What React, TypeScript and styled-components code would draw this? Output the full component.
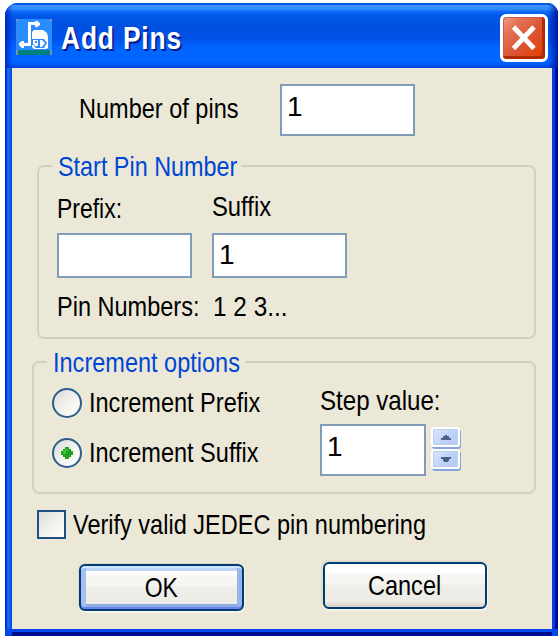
import React, { useState } from 'react';
import styled, { createGlobalStyle } from 'styled-components';

const GlobalStyle = createGlobalStyle`
  * { box-sizing: border-box; }
  body { margin: 0; background: #fff; overflow: hidden; }
`;

const Desktop = styled.div`
  width: 558px;
  height: 636px;
  padding: 3px 0 0 5px;
  background: #fff;
  font-family: 'Liberation Sans', Arial, sans-serif;
  color: #000;
`;

const Dialog = styled.section`
  width: 553px;
  height: 633px;
  display: flex;
  flex-direction: column;
  overflow: hidden;
  border-radius: 13px 11px 0 0;
  background: #0046e8;
`;

const TitleBar = styled.header`
  height: 65px;
  flex: none;
  display: flex;
  align-items: flex-start;
  padding: 11px 10px 0 11px;
  background:
    linear-gradient(90deg, rgba(0, 20, 190, 0.7) 0, rgba(0, 40, 210, 0) 8px, rgba(0, 40, 210, 0) 543px, rgba(0, 10, 150, 0.85) 553px),
    linear-gradient(180deg, #0058e6 0, #0058e6 2px, #3d95ff 2px, #318bff 6px, #0a66f4 9px, #0057e8 13px, #0050e0 22px, #0052e6 35px, #005cf8 41px, #0066ff 48px, #0066ff 59px, #0056f0 62px, #0042d0 65px);
`;

const AppIcon = styled.svg`
  flex: none;
  display: block;
  width: 36px;
  height: 36px;
  margin-top: 5px;
`;

const Title = styled.h1`
  flex: 1;
  margin: 9px 0 0 9px;
  font-size: 31px;
  line-height: 32px;
  font-weight: 700;
  letter-spacing: 1px;
  color: #fff;
  white-space: pre;
  text-shadow: 2px 2px 0 #0a1a88;
  transform: scaleX(0.85);
  transform-origin: left;
`;

const CloseButton = styled.button`
  flex: none;
  width: 48px;
  height: 48px;
  padding: 0;
  border: 3px solid #fff;
  border-radius: 6px;
  display: grid;
  place-items: center;
  background: linear-gradient(135deg, #f0a08c 0, #e5755a 22%, #dc5432 55%, #e04510 85%, #c03808 100%);
  box-shadow: inset -3px -3px 0 #b02c08, inset 1px 1px 0 #cc5a44;
`;

const Body = styled.main`
  flex: 1;
  margin: 0 6px 7px 7px;
  padding-top: 16px;
  background: #ebe8d8;
  box-shadow:
    -2px 0 0 #0050e4, -5px 0 0 #1666f2, -7px 0 0 #0030dc,
    3px 0 0 #0040e0, 6px 0 0 #000c90,
    0 3px 0 #0048f0, 0 7px 0 #000c90;
`;

const Row = styled.div<{ $left?: number; $gap?: number; $top?: number }>`
  display: flex;
  align-items: flex-start;
  padding-left: ${(p) => p.$left ?? 0}px;
  column-gap: ${(p) => p.$gap ?? 0}px;
  margin-top: ${(p) => p.$top ?? 0}px;
`;

const Column = styled.div`
  flex: none;
  display: flex;
  flex-direction: column;
`;

const Caption = styled.span<{ $width?: number; $squeeze?: number; $top?: number }>`
  flex: none;
  display: block;
  width: ${(p) => (p.$width ? `${p.$width}px` : 'auto')};
  height: 28px;
  margin-top: ${(p) => p.$top ?? 0}px;
  font-size: 28px;
  line-height: 28px;
  white-space: pre;
  transform: scaleX(${(p) => p.$squeeze ?? 0.84});
  transform-origin: left;
`;

const Field = styled.input<{ $width?: number; $height?: number }>`
  flex: none;
  display: block;
  width: ${(p) => p.$width ?? 135}px;
  height: ${(p) => p.$height ?? 52}px;
  margin: 0;
  padding: 0 5px ${(p) => ((p.$height ?? 52) > 46 ? 6 : 2)}px;
  border: 2px solid #7f9db9;
  border-radius: 0;
  outline: 0;
  background: #fff;
  color: #000;
  font: 28px 'Liberation Sans', Arial, sans-serif;
`;

const Group = styled.fieldset<{ $left: number; $top: number; $height: number }>`
  min-width: 0;
  margin: ${(p) => p.$top}px 16px 0 ${(p) => p.$left}px;
  padding: 0;
  height: ${(p) => p.$height}px;
  border: 2px solid #d0d0bf;
  border-radius: 7px;
`;

const Legend = styled.div<{ $width: number }>`
  width: ${(p) => p.$width}px;
  height: 28px;
  margin: -14px 0 0 13px;
  padding-left: 6px;
  background: #ebe8d8;
  color: #0046d5;
`;

const OptionButton = styled.button`
  display: flex;
  align-items: center;
  gap: 7px;
  height: 30px;
  width: 268px;
  margin: 0;
  padding: 0;
  border: 0;
  background: none;
  font-family: inherit;
  color: #000;
  text-align: left;
`;

const RadioDisc = styled.span`
  flex: none;
  width: 30px;
  height: 30px;
  border: 2px solid #2a5f8c;
  border-radius: 50%;
  display: grid;
  place-items: center;
  background: linear-gradient(135deg, #dcdcd7 0, #f3f3ef 55%, #fff 100%);
`;

const CheckSquare = styled.button`
  flex: none;
  width: 29px;
  height: 29px;
  padding: 0;
  border: 2px solid #1c5180;
  display: grid;
  place-items: center;
  background: linear-gradient(135deg, #dcdcd7 0, #f3f3ef 55%, #fff 100%);
`;

const Spinner = styled.div`
  width: 31px;
  display: grid;
  row-gap: 2px;
  margin: 3px 0 0 5px;
`;

const SpinButton = styled.button`
  width: 29px;
  height: 20px;
  padding: 0;
  display: grid;
  place-items: center;
  border: 2px solid #fff;
  border-radius: 3px;
  background: linear-gradient(135deg, #dce8ff 0, #c1d3fb 50%, #b2c8f6 100%);
  box-shadow: inset 0 0 0 1px #bccdf2, 1px 2px 0 #86a4dc;
`;

const PushButton = styled.button<{ $primary?: boolean; $width: number }>`
  flex: none;
  width: ${(p) => p.$width}px;
  height: 47px;
  padding: 0;
  display: grid;
  place-items: center;
  border: 2px solid #003c74;
  border-radius: 6px;
  color: #000;
  font-family: inherit;
  background: linear-gradient(180deg, #fff 0, #fff 20%, #f6f6f2 24%, #f4f4f0 46%, #eeeee9 50%, #ecebe6 88%, #d6d0c5 100%);
  box-shadow: ${(p) =>
    p.$primary
      ? 'inset 0 2px 0 #cee7ff, inset 0 -2px 0 #6982ee, inset 5px 0 0 #a5bff2, inset -5px 0 0 #98b4ea, inset 0 5px 0 #bcd4f6, inset 0 -5px 0 #89ade4, 1px 2px 0 #f6f4ec, -1px -1px 0 #dedbc9'
      : '1px 2px 0 #f6f4ec, -2px -2px 0 #dfddcd'};

  ${Caption} { transform-origin: center; }
`;

function ProgramIcon() {
  return (
    <AppIcon viewBox="0 0 36 36" aria-hidden="true">
      <path fill="#2b8cff" d="M0 0h36v31H0z" />
      <path fill="#008080" d="M2 31h32v5H2z" />
      <path fill="#7e8fb0" d="M0 31h2v5H0zM34 31h2v5h-2zM0 0h2v2H0zM34 0h2v2h-2z" />
      <path fill="#fff" d="M12 3h7V2h2l3 2v2l-3 2h-2V6h-4v21H8v2H6l-3-3v-2l3-2h2v2h4z" />
      <path fill="#fff" d="M18 11h9l4 3 1 4v11l-2 1H18l-2-2V13z" />
      <path fill="#2b8cff" d="M15 20h13l3 4-3 5h-8l-3-3h-2z" />
      <path fill="#fff" d="M17 21h5v6h-3l-2-2zM24 21h2l3 3-3 4h-2z" />
      <path fill="#2b8cff" d="M19 22h2v2h-2z" />
    </AppIcon>
  );
}

function CloseGlyph() {
  return (
    <svg width="26" height="26" viewBox="0 0 26 26" aria-hidden="true">
      <path d="M2.5 2 23 23.5M23 2 2.5 23.5" stroke="#fff" strokeWidth="4.8" />
    </svg>
  );
}

function RadioOption({ label, checked, onSelect }: { label: string; checked: boolean; onSelect: () => void }) {
  return (
    <OptionButton type="button" role="radio" aria-checked={checked} onClick={onSelect}>
      <RadioDisc>
        {checked && (
          <svg width="12" height="12" viewBox="0 0 12 12">
            <path fill="#21a121" d="M4 0h4v2h2v2h2v4h-2v2H8v2H4v-2H2V8H0V4h2V2h2z" />
            <path fill="#3fc53b" d="M4 2h3v2H5v3H2V4h2z" />
          </svg>
        )}
      </RadioDisc>
      <Caption $top={-1}>{label}</Caption>
    </OptionButton>
  );
}

export default function App() {
  const [mode, setMode] = useState<'prefix' | 'suffix'>('suffix');
  const [step, setStep] = useState(1);
  const [verify, setVerify] = useState(false);

  return (
    <>
      <GlobalStyle />
      <Desktop>
        <Dialog role="dialog" aria-label="Add Pins">
          <TitleBar>
            <ProgramIcon />
            <Title>Add Pins</Title>
            <CloseButton type="button" aria-label="Close">
              <CloseGlyph />
            </CloseButton>
          </TitleBar>
          <Body>
            <Row $left={67}>
              <Caption $width={201} $top={11}>Number of pins</Caption>
              <Field defaultValue="1" aria-label="Number of pins" />
            </Row>

            <Group $left={25} $top={29} $height={174}>
              <Legend $width={189}>
                <Caption $squeeze={0.835}>Start Pin Number</Caption>
              </Legend>
              <Row $left={18} $top={12}>
                <Column>
                  <Caption $width={155} $top={2} $squeeze={0.82}>Prefix:</Caption>
                </Column>
                <Caption $squeeze={0.85}>Suffix</Caption>
              </Row>
              <Row $left={18} $gap={20} $top={10}>
                <Field $height={45} aria-label="Prefix" />
                <Field $height={45} defaultValue="1" aria-label="Suffix" />
              </Row>
              <Row $left={18} $top={15}>
                <Caption $width={156}>Pin Numbers:</Caption>
                <Caption $squeeze={0.87}>1 2 3...</Caption>
              </Row>
            </Group>

            <Group $left={20} $top={22} $height={133}>
              <Legend $width={198}>
                <Caption>Increment options</Caption>
              </Legend>
              <Row $left={18} $top={10}>
                <Column role="radiogroup">
                  <Row $top={1}>
                    <RadioOption label="Increment Prefix" checked={mode === 'prefix'} onSelect={() => setMode('prefix')} />
                  </Row>
                  <Row $top={20}>
                    <RadioOption label="Increment Suffix" checked={mode === 'suffix'} onSelect={() => setMode('suffix')} />
                  </Row>
                </Column>
                <Column>
                  <Caption $width={120} $squeeze={0.86}>Step value:</Caption>
                  <Row $top={9}>
                    <Field $width={106} value={step} onChange={(e) => setStep(Number(e.target.value) || 0)} aria-label="Step value" />
                    <Spinner>
                      <SpinButton type="button" aria-label="Increase" onClick={() => setStep(step + 1)}>
                        <svg width="10" height="5" viewBox="0 0 10 5" display="block"><path fill="#4d6185" d="M4 0h2v1h2v2h2v2H0V3h2V1h2z" /></svg>
                      </SpinButton>
                      <SpinButton type="button" aria-label="Decrease" onClick={() => setStep(step - 1)}>
                        <svg width="10" height="5" viewBox="0 0 10 5" display="block"><path fill="#4d6185" d="M0 0h10v2H8v2H7v1H3V4H2V2H0z" /></svg>
                      </SpinButton>
                    </Spinner>
                  </Row>
                </Column>
              </Row>
            </Group>

            <Row $left={25} $gap={7} $top={16}>
              <CheckSquare type="button" role="checkbox" aria-checked={verify} onClick={() => setVerify(!verify)}>
                {verify && (
                  <svg width="19" height="19" viewBox="0 0 19 19"><path d="M3 8l4 5 9-9" fill="none" stroke="#21a121" strokeWidth="4" /></svg>
                )}
              </CheckSquare>
              <Caption $top={1}>Verify valid JEDEC pin numbering</Caption>
            </Row>

            <Row $left={67} $gap={79} $top={23}>
              <Column>
                <Row $top={2}>
                  <PushButton type="button" $primary $width={165}>
                    <Caption $squeeze={0.82}>OK</Caption>
                  </PushButton>
                </Row>
              </Column>
              <PushButton type="button" $width={164}>
                <Caption>Cancel</Caption>
              </PushButton>
            </Row>
          </Body>
        </Dialog>
      </Desktop>
    </>
  );
}
